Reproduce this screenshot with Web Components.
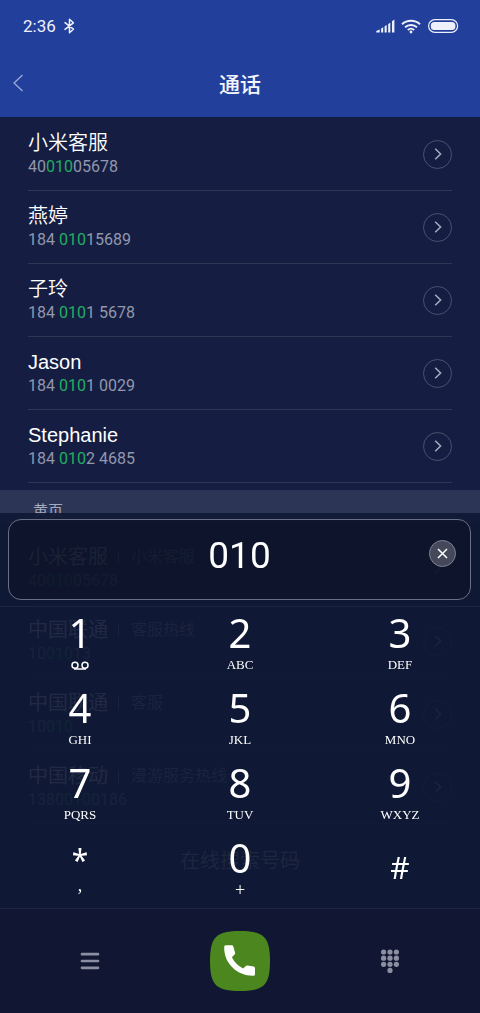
<!DOCTYPE html>
<html lang="zh-CN">
<head>
<meta charset="utf-8">
<meta name="viewport" content="width=device-width, initial-scale=1">
<title>通话</title>
<style>
  html, body { margin: 0; min-height: 100%; background: #151e42; }
  body { font-family: "Liberation Sans", "Noto Sans CJK SC", sans-serif; color: #fff; }
</style>
</head>
<body>
<call-screen></call-screen>

<script>
const define = (name, html, setup) => customElements.define(name, class extends HTMLElement {
  connectedCallback() {
    if (this.shadowRoot) return;
    const root = this.attachShadow({ mode: 'open' });
    const tpl = document.createElement('template');
    tpl.innerHTML = html(this);
    root.append(tpl.content.cloneNode(true));
    if (setup) setup(this, root);
  }
});

define('status-bar', () => `
  <style>
    :host { display: flex; align-items: center; justify-content: space-between; height: 52px; padding: 0 21px 0 23px; color: #eef1fb; }
    div { display: flex; align-items: center; gap: 6px; }
    time { font: 400 17px/20px Roboto, sans-serif; }
    svg { display: block; }
  </style>
  <div>
    <time>2:36</time>
    <svg width="14" height="16" viewBox="0 0 14 16" fill="none" stroke="currentColor" stroke-width="1.5" stroke-linejoin="round" stroke-linecap="round"><path d="M3 4.6 L11.4 11.2 L7.5 14.8 V1.2 L11.4 4.8 L3 11.4"/></svg>
  </div>
  <div>
    <svg width="19" height="14" viewBox="0 0 19 14" fill="currentColor"><path d="M.3 13.5V12l3.4-1.6v3.1zM5.1 13.5V9.4L7.2 8.2v5.3zM8.6 13.5V7.2L10.7 6v7.5zM12.2 13.5V5l2.1-1.2v9.7zM16 13.5V2.2L18.4.5v13z"/></svg>
    <svg width="20" height="15" viewBox="0 0 20 15" fill="none" stroke="currentColor" stroke-width="1.9"><path d="M1 5.2a13.4 13.4 0 0 1 18 0M4 8.3a9 9 0 0 1 12 0M6.8 11a4.9 4.9 0 0 1 6.4 0"/><circle cx="10" cy="13" r="1.4" fill="currentColor" stroke="none"/></svg>
    <svg width="32" height="14" viewBox="0 0 32 14"><rect x="1.6" y=".7" width="29" height="12.6" rx="6.3" fill="none" stroke="currentColor" stroke-width="1.2"/><rect x="3.8" y="2.9" width="24.6" height="8.2" rx="3.6" fill="currentColor"/></svg>
  </div>`);

define('title-bar', () => `
  <style>
    :host { display: grid; grid-template-columns: 40px 1fr 40px; align-items: center; box-sizing: border-box; height: 65px; padding-bottom: 4px; }
    button { display: flex; align-items: center; justify-content: flex-start; height: 40px; padding: 0 0 0 12px; border: 0; background: none; color: #9dabd9; }
    h1 { margin: 0; text-align: center; font: 500 21px/28px "Noto Sans CJK SC", sans-serif; color: #f3f5fd; }
  </style>
  <button aria-label="返回"><svg width="12" height="18" viewBox="0 0 12 18" fill="none" stroke="currentColor" stroke-width="1.3"><path d="M10.5 1 L2 9 L10.5 17"/></svg></button>
  <h1><slot></slot></h1>`);

define('contact-row', el => {
  const m = el.getAttribute('match'), note = el.getAttribute('note');
  const number = el.getAttribute('number').replace(m, `<mark>${m}</mark>`);
  return `
  <style>
    :host { display: flex; align-items: center; justify-content: space-between; box-sizing: border-box; height: 73px; margin: 0 28px; border-bottom: 1px solid #2f3757; }
    .name { display: flex; align-items: center; gap: 10px; font-size: 20px; font-weight: 350; line-height: 26px; }
    i { width: 1px; height: 13px; background: #9a9fb2; }
    small { margin-left: 2px; font-size: 16px; color: #a5a9bb; }
    .number { font: 400 16px/22px Roboto, sans-serif; color: #9297ac; }
    mark { background: none; color: #20ae60; }
    button { display: flex; align-items: center; justify-content: center; box-sizing: border-box; width: 29px; height: 29px; padding: 0 0 0 1px; border: 1px solid #4a5170; border-radius: 50%; background: none; color: #a9adbf; }
  </style>
  <div>
    <div class="name"><slot></slot>${note ? `<i></i><small>${note}</small>` : ''}</div>
    <div class="number">${number}</div>
  </div>
  <button aria-label="详情"><svg width="8" height="12" viewBox="0 0 8 12" fill="none" stroke="currentColor" stroke-width="1.5"><path d="M1.2 .8 L6.6 6 L1.2 11.2"/></svg></button>`;
});

define('section-label', () => `
  <style>
    :host { display: block; margin: 7px 0 9px; padding: 8px 33px 0; height: 25px; background: #2d3556; font-size: 15px; line-height: 26px; color: #a5aabd; }
  </style>
  <slot></slot>`);

define('search-link', () => `
  <style>
    :host { display: flex; justify-content: center; align-items: center; height: 73px; }
    a { color: #c4c7d4; text-decoration: none; font-size: 20px; font-weight: 350; line-height: 26px; }
  </style>
  <a href="#search"><slot></slot></a>`);

define('number-field', el => `
  <style>
    :host { display: grid; align-items: center; position: relative; box-sizing: border-box; height: 81px; margin: 6px 9px 6px 8px; padding-bottom: 8px; border: 1px solid #6a6f84; border-radius: 13px; background: rgba(10, 12, 28, .3); }
    input { min-width: 0; box-sizing: border-box; width: 100%; height: 56px; padding: 0 56px; border: 0; outline: 0; background: none; text-align: center; color: #fff; font: 400 37px/56px Roboto, sans-serif; }
    button { position: absolute; right: 14px; top: 20px; display: flex; align-items: center; justify-content: center; width: 27px; height: 27px; padding: 0; border: 1px solid #7f8394; border-radius: 50%; background: #44485a; color: #fff; box-sizing: border-box; }
  </style>
  <input type="tel" aria-label="电话号码" value="${el.getAttribute('value')}">
  <button aria-label="清除"><svg width="11" height="11" viewBox="0 0 11 11" stroke="currentColor" stroke-width="1.5"><path d="M1 1 L10 10 M10 1 L1 10"/></svg></button>`,
  (el, root) => root.querySelector('button').addEventListener('click', () => { root.querySelector('input').value = ''; }));

define('dial-key', el => `
  <style>
    :host { display: block; }
    button { display: flex; flex-direction: column; align-items: center; box-sizing: border-box; width: 100%; height: 75px; padding: 2px 0 0; border: 0; background: none; color: #fff; }
    .digit { font: 400 40px/46px "Noto Sans", sans-serif; }
    .sub { display: flex; align-items: center; height: 18px; font: 400 13px/18px "Liberation Serif", serif; }
    .sub:empty { display: none; }
    :host([plus]) .sub { font-size: 18px; }
    :host([star]) .digit { font-size: 30px; line-height: 50px; }
    :host([star]) .sub { align-items: flex-start; font-size: 18px; line-height: 0; }
    :host([hash]) .digit { font-size: 30px; line-height: 66px; }
  </style>
  <button><span class="digit">${el.getAttribute('digit')}</span><span class="sub">${el.hasAttribute('voicemail')
    ? '<svg width="18" height="9" viewBox="0 0 18 9" fill="none" stroke="currentColor" stroke-width="1.5"><circle cx="4" cy="4.3" r="3"/><circle cx="14" cy="4.3" r="3"/><path d="M3 8H15"/></svg>'
    : el.getAttribute('sub') || ''}</span></button>`);

define('dial-pad', () => `
  <style>
    :host { display: grid; grid-template-columns: repeat(3, 1fr); padding-top: 1px; border-top: 1px solid #1c2643; }
  </style>
  <dial-key digit="1" voicemail></dial-key><dial-key digit="2" sub="ABC"></dial-key><dial-key digit="3" sub="DEF"></dial-key>
  <dial-key digit="4" sub="GHI"></dial-key><dial-key digit="5" sub="JKL"></dial-key><dial-key digit="6" sub="MNO"></dial-key>
  <dial-key digit="7" sub="PQRS"></dial-key><dial-key digit="8" sub="TUV"></dial-key><dial-key digit="9" sub="WXYZ"></dial-key>
  <dial-key digit="*" sub="," star></dial-key><dial-key digit="0" sub="+" plus></dial-key><dial-key digit="#" hash></dial-key>`);

define('action-bar', () => `
  <style>
    :host { display: grid; grid-template-columns: repeat(3, 1fr); place-items: center; height: 104px; padding: 0 15px; border-top: 1px solid #1b2440; background: #111733; }
    button { display: flex; align-items: center; justify-content: center; width: 60px; height: 60px; padding: 0; border: 0; background: none; color: #8c8fa1; }
  </style>
  <button aria-label="菜单"><svg width="20" height="18" viewBox="0 0 20 18" stroke="currentColor" stroke-width="2.7" stroke-linecap="round"><path d="M2 2.2H18M2 9H18M2 15.8H18"/></svg></button>
  <button aria-label="拨打"><svg width="60" height="60" viewBox="0 0 60 60"><path fill="#4b861e" d="M30 0C53 0 60 5 60 30S53 60 30 60 0 55 0 30 7 0 30 0Z"/><path fill="#fff" d="M15.6 14.3H21.8Q23 14.3 23.3 15.4L25.1 21.8Q25.3 22.8 24.6 23.5L21.9 26.2Q25.4 33.4 33.1 37.5L35.8 35Q36.6 34.3 37.5 34.5L43.6 35.5Q45 35.8 45 37.2V43.2Q45 44.8 43.4 44.8C28 45.2 13.6 33 14.2 15.8Q14.2 14.3 15.6 14.3Z"/></svg></button>
  <button aria-label="拨号键盘"><svg width="20" height="24" viewBox="0 0 20 24" fill="currentColor"><circle cx="3.6" cy="3" r="2.6"/><circle cx="10" cy="3" r="2.6"/><circle cx="16.4" cy="3" r="2.6"/><circle cx="3.6" cy="9.2" r="2.6"/><circle cx="10" cy="9.2" r="2.6"/><circle cx="16.4" cy="9.2" r="2.6"/><circle cx="3.6" cy="15.3" r="2.6"/><circle cx="10" cy="15.3" r="2.6"/><circle cx="16.4" cy="15.3" r="2.6"/><circle cx="10" cy="21.4" r="2.6"/></svg></button>`);

define('call-screen', () => `
  <style>
    :host { display: block; }
    header { background: #223f9b; }
    main { padding-top: 1px; }
    footer { position: fixed; left: 0; right: 0; bottom: 0; display: flow-root; background: rgba(15, 24, 51, .92); }
  </style>
  <header>
    <status-bar></status-bar>
    <title-bar>通话</title-bar>
  </header>
  <main>
    <contact-row number="4001005678" match="010">小米客服</contact-row>
    <contact-row number="184 01015689" match="010">燕婷</contact-row>
    <contact-row number="184 0101 5678" match="010">子玲</contact-row>
    <contact-row number="184 0101 0029" match="010">Jason</contact-row>
    <contact-row number="184 0102 4685" match="010">Stephanie</contact-row>
    <section-label>黄页</section-label>
    <contact-row number="4001005678" match="010" note="小米客服">小米客服</contact-row>
    <contact-row number="1001013" match="010" note="客服热线">中国联通</contact-row>
    <contact-row number="10010" match="010" note="客服">中国联通</contact-row>
    <contact-row number="13800100186" match="010" note="漫游服务热线">中国移动</contact-row>
    <search-link>在线搜索号码</search-link>
  </main>
  <footer>
    <number-field value="010"></number-field>
    <dial-pad></dial-pad>
    <action-bar></action-bar>
  </footer>`);
</script>
</body>
</html>
